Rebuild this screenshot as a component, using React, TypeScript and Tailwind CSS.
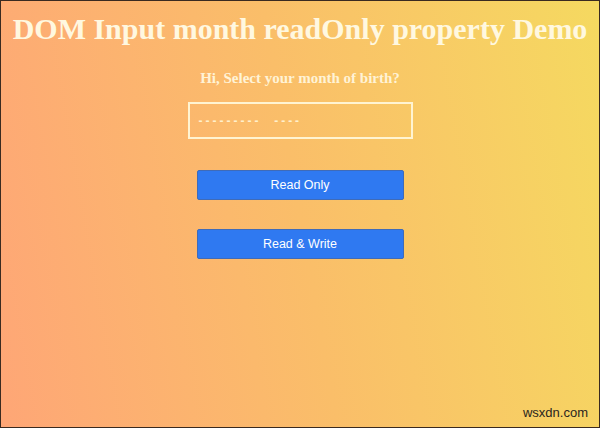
export default function App() {
    return (
        <div className="relative h-[428px] w-[600px] overflow-hidden border border-[#3a2a20] bg-linear-80 from-[#fea676] via-[#fabe69] to-[#f5d960]">
            <div className="flex flex-col items-center">
                <h1 className="mt-[11px] font-['Liberation_Serif',serif] text-[30px] leading-[34px] font-bold text-[#fff8e0]">
                    DOM Input month readOnly property Demo
                </h1>
                <p className="mt-[23px] font-['Liberation_Serif',serif] text-[15px] leading-[18px] font-bold text-[#fff3d6]">
                    Hi, Select your month of birth?
                </p>
                <div className="mt-[15px] flex h-[37px] w-[225px] items-center border-2 border-[#fff4d2] px-[9px]">
                    <span className="font-['Liberation_Sans',sans-serif] text-[12px] font-bold tracking-[3px] text-[#fff0cc]">
                        ---------&nbsp;&nbsp;----
                    </span>
                </div>
                <button className="mt-[31px] h-[30px] w-[207px] rounded-[2px] border border-[#3f6bb8] bg-[#2f79f1] font-['Liberation_Sans',sans-serif] text-[12.5px] text-white">
                    Read Only
                </button>
                <button className="mt-[29px] h-[30px] w-[207px] rounded-[2px] border border-[#3f6bb8] bg-[#2f79f1] font-['Liberation_Sans',sans-serif] text-[12.5px] text-white">
                    Read &amp; Write
                </button>
            </div>
            <span className="absolute right-[11px] bottom-[5px] font-['Liberation_Sans',sans-serif] text-[13px] text-[#2a2520]">
                wsxdn.com
            </span>
        </div>
    );
}
